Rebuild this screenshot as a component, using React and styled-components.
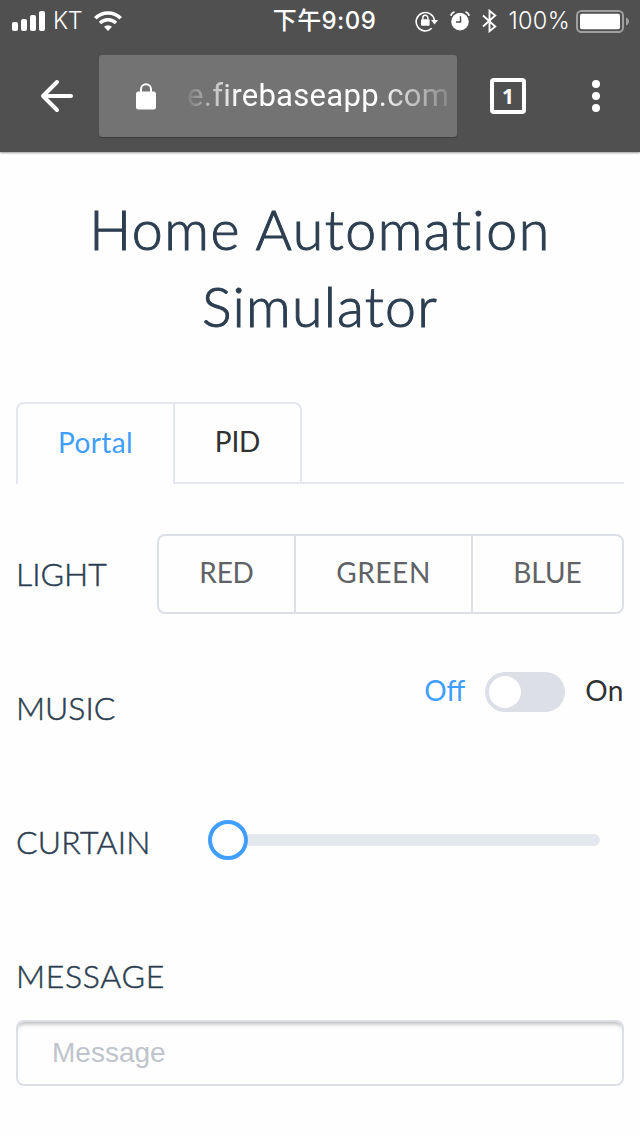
import React from "react";
import styled, { createGlobalStyle } from "styled-components";

const Global = createGlobalStyle`
  * { box-sizing: border-box; }
  body { margin: 0; background: #fefefe; }
  button, input { font: inherit; margin: 0; }
`;

const brandFont = `Lato, "Liberation Sans", sans-serif`;

const Screen = styled.div`
  width: 640px;
  height: 1136px;
  overflow: hidden;
  display: flex;
  flex-direction: column;
  background: #fefefe;
  color: #2c3e50;
  font-family: ${brandFont};
`;

const Header = styled.header`
  height: 152px;
  flex: none;
  background: #505050;
  color: #fff;
  box-shadow: 0 1px 2px rgba(0, 0, 0, 0.4);
`;

const StatusBar = styled.div`
  height: 40px;
  padding: 0 11px 0 12px;
  display: grid;
  grid-template-columns: 1fr auto 1fr;
  align-items: center;
  font-family: Inter, "Noto Sans CJK TC", sans-serif;
  font-size: 23.5px;
  line-height: 42px;
`;

const StatusGroup = styled.div`
  display: flex;
  align-items: center;
  justify-content: ${(p) => (p.$end ? "flex-end" : "flex-start")};
  svg { display: block; flex: none; }
`;

const Carrier = styled.span`
  margin: 0 12px 0 8px;
  font-weight: 300;
  letter-spacing: -0.4px;
`;

const Clock = styled.div`
  font-size: 24px;
  font-weight: 500;
  letter-spacing: 0.4px;
  padding-left: 8px;
`;

const Percent = styled.span`
  margin: 0 6px 0 12px;
  font-weight: 300;
  letter-spacing: 0.3px;
`;

const Icons = styled.span`
  display: flex;
  align-items: center;
  gap: 12px;
`;

const Toolbar = styled.div`
  height: 112px;
  display: flex;
  align-items: center;
  padding: 0 32px 0 36px;
  svg { display: block; flex: none; }
`;

const AddressBar = styled.div`
  width: 358px;
  height: 82px;
  margin: 0 33px 0 21px;
  padding: 0 6px 0 37px;
  display: flex;
  align-items: center;
  gap: 31px;
  background: #737373;
  border-radius: 3px;
  box-shadow: 0 1px 1px rgba(0, 0, 0, 0.25);
`;

const Address = styled.span`
  font: 400 31px/40px Roboto, sans-serif;
  letter-spacing: 0.3px;
  white-space: nowrap;
  mask-image: linear-gradient(90deg, rgba(0, 0, 0, 0.08), #000 52px, #000 190px, rgba(0, 0, 0, 0.15) 262px);
`;

const TabCount = styled.div`
  width: 36px;
  height: 36px;
  margin-right: 58px;
  border: 4px solid #fff;
  border-radius: 4px;
  font: 700 21px/28px "Noto Sans", sans-serif;
  text-align: center;
`;

const Content = styled.main`
  flex: 1;
  padding: 38px 16px 0;
  display: flex;
  flex-direction: column;
`;

const Title = styled.h1`
  margin: 0 0 58px;
  font-size: 55.5px;
  line-height: 77px;
  font-weight: 300;
  -webkit-text-stroke: 1px currentColor;
  text-align: center;
`;

const TitleLine = styled.span`
  display: block;
  letter-spacing: ${(p) => p.$tracking};
`;

const Tabs = styled.div`
  height: 82px;
  margin-bottom: 50px;
  display: flex;
`;

const Tab = styled.button`
  width: ${(p) => p.$width}px;
  padding: 0 0 4px;
  background: none;
  border: 2px solid #e4e7ed;
  border-right-width: ${(p) => (p.$active ? 0 : 2)}px;
  border-bottom-width: ${(p) => (p.$active ? 0 : 2)}px;
  border-radius: ${(p) => (p.$active ? "8px 0 0 0" : "0 8px 0 0")};
  color: ${(p) => (p.$active ? "#409eff" : "#303133")};
  font-size: 28px;
  font-weight: 400;
  letter-spacing: ${(p) => p.$tracking};
`;

const TabsRule = styled.div`
  flex: 1;
  border-bottom: 2px solid #e4e7ed;
`;

const Row = styled.section`
  height: 134px;
  display: flex;
  justify-content: space-between;
`;

const Label = styled.label`
  display: block;
  height: 80px;
  font-size: 32px;
  font-weight: 300;
  -webkit-text-stroke: 0.5px currentColor;
  line-height: 80px;
  letter-spacing: ${(p) => p.$tracking};
`;

const Segments = styled.div`
  width: 467px;
  height: 80px;
  display: flex;
  border: 2px solid #dcdfe6;
  border-radius: 8px;
`;

const Segment = styled.button`
  width: ${(p) => p.$width}px;
  padding: 0 0 4px;
  background: none;
  border: 0;
  border-right: ${(p) => (p.$last ? "0" : "2px solid #dcdfe6")};
  color: #606266;
  font-size: 28px;
  letter-spacing: ${(p) => p.$tracking};
`;

const SwitchRow = styled.div`
  height: 40px;
  margin-top: 4px;
  display: flex;
  align-items: center;
  gap: 20px;
`;

const SwitchText = styled.span`
  color: ${(p) => (p.$active ? "#409eff" : "#303133")};
  font-size: 28px;
  line-height: 36px;
  padding-bottom: 4px;
  letter-spacing: ${(p) => p.$tracking};
`;

const Switch = styled.button`
  width: 80px;
  height: 40px;
  padding: 4px;
  border: 0;
  border-radius: 20px;
  background: #dcdfe6;
`;

const Knob = styled.span`
  display: block;
  width: 32px;
  height: 32px;
  border-radius: 50%;
  background: #fff;
`;

const Slider = styled.div`
  width: 392px;
  height: 40px;
  margin: 18px 24px 0 0;
  display: flex;
  align-items: center;
`;

const Handle = styled.span`
  width: 40px;
  height: 40px;
  border: 4px solid #409eff;
  border-radius: 50%;
  background: #fff;
`;

const Track = styled.span`
  flex: 1;
  height: 12px;
  border-radius: 0 6px 6px 0;
  background: #e4e7ed;
`;

const Field = styled.div`
  display: flex;
  flex-direction: column;
  gap: 4px;
`;

const Input = styled.input`
  width: 608px;
  height: 66px;
  padding: 0 34px;
  border: 2px solid #dcdfe6;
  border-radius: 8px;
  outline: 0;
  background: #fefefe;
  box-shadow: inset 0 6px 4px -4px rgba(0, 0, 0, 0.28);
  font: 28px "Liberation Sans", sans-serif;
  &::placeholder { color: #c0c4cc; opacity: 1; }
`;

const SignalIcon = () => (
  <svg width="33" height="20" viewBox="0 0 33 20" fill="#fff">
    <rect x="0" y="11" width="6" height="9" rx="2" />
    <rect x="9" y="8" width="6" height="12" rx="2" />
    <rect x="18" y="4" width="6" height="16" rx="2" />
    <rect x="27" y="0" width="6" height="20" rx="2" />
  </svg>
);

const WifiIcon = () => (
  <svg width="28" height="20" viewBox="0 0 28 20" fill="none" stroke="#fff" strokeWidth="3.6">
    <path d="M1.3 7.2a18 18 0 0 1 25.4 0" />
    <path d="M6 12a11.4 11.4 0 0 1 16 0" strokeWidth="3.4" />
    <path d="M14 20l-4-4.2a5.8 5.8 0 0 1 8 0z" fill="#fff" stroke="none" />
  </svg>
);

const RotationLockIcon = () => (
  <svg width="23" height="22" viewBox="0 0 23 22" fill="none" stroke="#fff">
    <path d="M16.8 18.3A9.2 9.2 0 1 1 19.4 10" strokeWidth="1.6" />
    <path d="M16 10h7l-3.5 4.4z" fill="#fff" stroke="none" />
    <rect x="6" y="9.3" width="8.6" height="6.4" rx="1" fill="#fff" stroke="none" />
    <path d="M7.8 9.5V7.7a2.5 2.5 0 0 1 5 0v1.8" strokeWidth="1.5" />
  </svg>
);

const AlarmIcon = () => (
  <svg width="20" height="20" viewBox="0 0 20 20" fill="none" stroke="#fff">
    <circle cx="10" cy="10.6" r="8.8" fill="#fff" stroke="none" />
    <path d="M.8 4.8C1.2 3 2.6 1.5 4.6 1M19.2 4.8C18.8 3 17.4 1.5 15.4 1" strokeWidth="1.8" />
    <path d="M10.5 5.2v5.8H6" stroke="#505050" strokeWidth="1.5" />
  </svg>
);

const BluetoothIcon = () => (
  <svg width="15" height="24" viewBox="0 0 15 24" fill="none" stroke="#fff" strokeWidth="1.9">
    <path d="M1 6.5l12.2 11-5.7 4.7V1.8l5.7 4.7L1 17.5" />
  </svg>
);

const BatteryIcon = () => (
  <svg width="53" height="23" viewBox="0 0 53 23">
    <rect x="1" y="1" width="46" height="21" rx="4.5" fill="none" stroke="#a0a0a0" strokeWidth="2" />
    <rect x="4" y="3.8" width="40" height="15.4" rx="2" fill="#fff" />
    <path d="M50 7.5c2 .8 3 2.2 3 4s-1 3.2-3 4z" fill="#a0a0a0" />
  </svg>
);

const BackIcon = () => (
  <svg width="42" height="42" viewBox="0 0 42 42" fill="none" stroke="#fff" strokeWidth="4" strokeLinecap="round" strokeLinejoin="round">
    <path d="M35 21H7M21 7L7 21l14 14" />
  </svg>
);

const LockIcon = () => (
  <svg width="20" height="27" viewBox="0 0 20 27">
    <rect y="8.5" width="20" height="18" rx="2.5" fill="#fff" />
    <path d="M5 9V6.2a5 5 0 0 1 10 0V9" fill="none" stroke="#fff" strokeWidth="2" />
  </svg>
);

const MenuIcon = () => (
  <svg width="24" height="36" viewBox="0 0 24 36" fill="#fff">
    <circle cx="12" cy="6" r="4" />
    <circle cx="12" cy="18" r="4" />
    <circle cx="12" cy="30" r="4" />
  </svg>
);

export default function App() {
  return (
    <Screen>
      <Global />
      <Header>
        <StatusBar>
          <StatusGroup>
            <SignalIcon />
            <Carrier>KT</Carrier>
            <WifiIcon />
          </StatusGroup>
          <Clock>下午9:09</Clock>
          <StatusGroup $end>
            <Icons>
              <RotationLockIcon />
              <AlarmIcon />
              <BluetoothIcon />
            </Icons>
            <Percent>100%</Percent>
            <BatteryIcon />
          </StatusGroup>
        </StatusBar>
        <Toolbar>
          <BackIcon />
          <AddressBar>
            <LockIcon />
            <Address>e.firebaseapp.com</Address>
          </AddressBar>
          <TabCount>1</TabCount>
          <MenuIcon />
        </Toolbar>
      </Header>
      <Content>
        <Title>
          <TitleLine $tracking="1.5px">Home Automation</TitleLine>
          <TitleLine $tracking="1.2px">Simulator</TitleLine>
        </Title>
        <Tabs>
          <Tab $active $width={157} $tracking="0.4px">Portal</Tab>
          <Tab $width={129} $tracking="-0.2px">PID</Tab>
          <TabsRule />
        </Tabs>
        <Row>
          <Label $tracking="0">LIGHT</Label>
          <Segments>
            <Segment $width={137} $tracking="-0.2px">RED</Segment>
            <Segment $width={177} $tracking="0.6px">GREEN</Segment>
            <Segment $width={149} $tracking="0" $last>BLUE</Segment>
          </Segments>
        </Row>
        <Row>
          <Label $tracking="0">MUSIC</Label>
          <SwitchRow>
            <SwitchText $active $tracking="0">Off</SwitchText>
            <Switch aria-label="Music"><Knob /></Switch>
            <SwitchText $tracking="0.5px">On</SwitchText>
          </SwitchRow>
        </Row>
        <Row>
          <Label $tracking="0.2px">CURTAIN</Label>
          <Slider>
            <Handle />
            <Track />
          </Slider>
        </Row>
        <Field>
          <Label htmlFor="message" $tracking="0.7px">MESSAGE</Label>
          <Input id="message" placeholder="Message" />
        </Field>
      </Content>
    </Screen>
  );
}
